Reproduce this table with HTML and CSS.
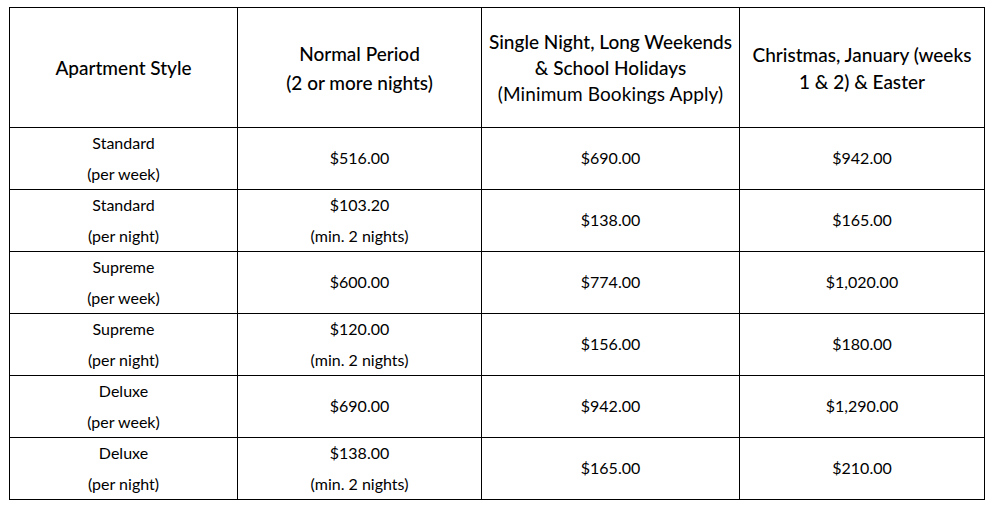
FILE: index.html
```html
<!DOCTYPE html>
<html>
<head>
<meta charset="utf-8">
<link rel="stylesheet" href="styles.css">
</head>
<body>
<table class="rates">
  <colgroup>
    <col class="c1"><col class="c2"><col class="c3"><col class="c4">
  </colgroup>
  <thead>
    <tr class="head">
      <th>Apartment Style</th>
      <th><span class="ln">Normal Period</span><span class="ln">(2 or more nights)</span></th>
      <th class="tight"><span class="ln">Single Night, Long Weekends</span><span class="ln">&amp; School Holidays</span><span class="ln note">(Minimum Bookings Apply)</span></th>
      <th class="wrap"><span class="ln">Christmas, January (weeks</span><span class="ln">1 &amp; 2) &amp; Easter</span></th>
    </tr>
  </thead>
  <tbody>
    <tr><td><span class="ln">Standard</span><span class="ln">(per week)</span></td><td>$516.00</td><td>$690.00</td><td>$942.00</td></tr>
    <tr><td><span class="ln">Standard</span><span class="ln">(per night)</span></td><td><span class="ln">$103.20</span><span class="ln">(min. 2 nights)</span></td><td>$138.00</td><td>$165.00</td></tr>
    <tr><td><span class="ln">Supreme</span><span class="ln">(per week)</span></td><td>$600.00</td><td>$774.00</td><td>$1,020.00</td></tr>
    <tr><td><span class="ln">Supreme</span><span class="ln">(per night)</span></td><td><span class="ln">$120.00</span><span class="ln">(min. 2 nights)</span></td><td>$156.00</td><td>$180.00</td></tr>
    <tr><td><span class="ln">Deluxe</span><span class="ln">(per week)</span></td><td>$690.00</td><td>$942.00</td><td>$1,290.00</td></tr>
    <tr class="last"><td><span class="ln">Deluxe</span><span class="ln">(per night)</span></td><td><span class="ln">$138.00</span><span class="ln">(min. 2 nights)</span></td><td>$165.00</td><td>$210.00</td></tr>
  </tbody>
</table>
</body>
</html>
```
FILE: styles.css
```css
html, body {
  margin: 0;
  padding: 0;
  background: #ffffff;
}
body {
  padding: 7px 8px 0 9px;
  font-family: "Lato", "Open Sans", sans-serif;
  color: #000;
}
.rates {
  border-collapse: collapse;
  table-layout: fixed;
  width: 975px;
}
.c1 { width: 228px; }
.c2 { width: 244px; }
.c3 { width: 258px; }
.c4 { width: 245px; }
.rates th, .rates td {
  border: 1px solid #000;
  text-align: center;
  vertical-align: middle;
  padding: 0;
}
.rates th {
  font-size: 19px;
  font-weight: 500;
  line-height: 29px;
  height: 119px;
  white-space: nowrap;
}
.rates th.tight { line-height: 26px; }
.rates th.wrap { line-height: 27px; }
.rates td {
  font-size: 16px;
  font-weight: 400;
  line-height: 30.5px;
  height: 61px;
}
.rates tr.last td { height: 60px; }
.ln { display: block; }
.note {
  font-weight: 400;
  letter-spacing: 0.1px;
}
```
